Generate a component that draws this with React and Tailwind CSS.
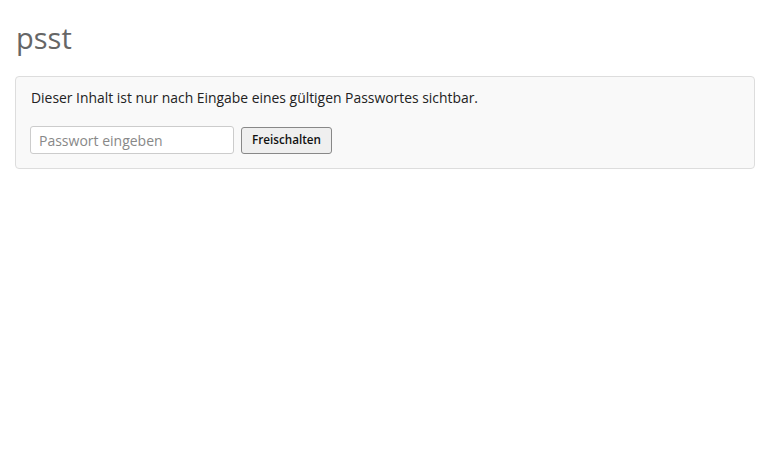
export default function App() {
  return (
    <div className="min-h-[475px] bg-white px-[15px] pt-[18px]" style={{ fontFamily: "'Open Sans', sans-serif" }}>
      <h1 className="pl-px text-[29px] leading-[40px] font-normal text-[#666]">psst</h1>
      <div className="mt-[18px] w-[740px] rounded-[4px] border border-[#ddd] bg-[#f9f9f9] px-[15px] pt-[11px] pb-[14px]">
        <p className="text-[13.9px] leading-[20px] text-[#222]">
          Dieser Inhalt ist nur nach Eingabe eines gültigen Passwortes sichtbar.
        </p>
        <form className="mt-[18px] -ml-px flex items-center gap-[7px]" onSubmit={(e) => e.preventDefault()}>
          <input
            type="password"
            placeholder="Passwort eingeben"
            className="h-[28px] w-[204px] rounded-[3px] border border-[#ccc] bg-white px-[8px] text-[14px] text-[#333] placeholder:text-[#888] outline-none"
          />
          <button
            type="submit"
            className="h-[27px] w-[91px] rounded-[3px] border border-[#888] bg-[#efefef] text-[11.7px] font-semibold text-[#111]"
          >
            Freischalten
          </button>
        </form>
      </div>
    </div>
  );
}
